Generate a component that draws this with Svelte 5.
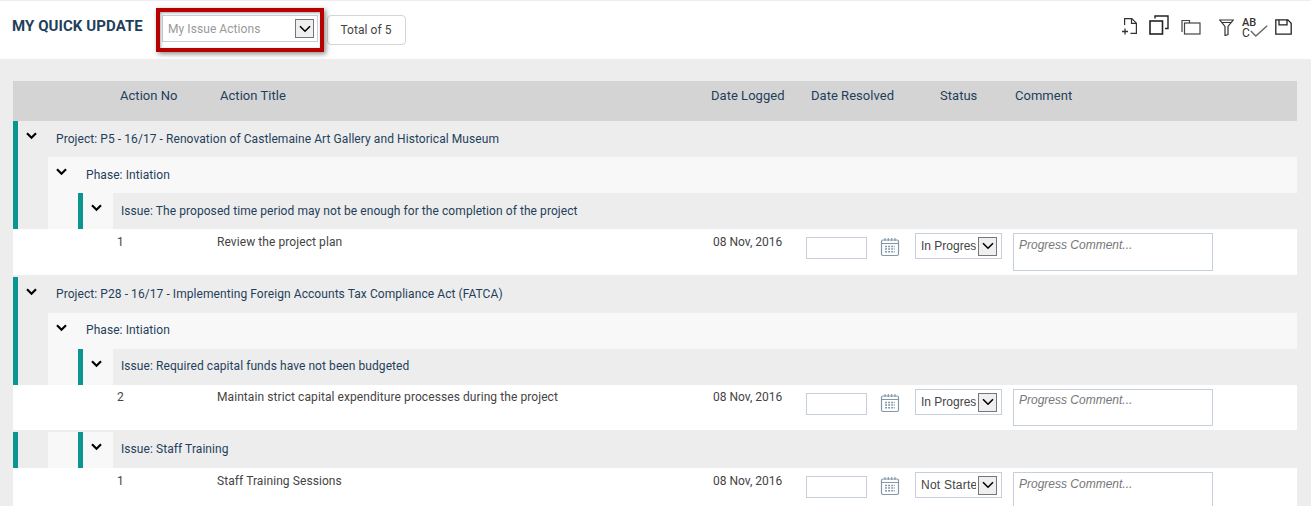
<script>
  const sections = [
    {
      cls: '',
      project: 'Project: P5 - 16/17 - Renovation of Castlemaine Art Gallery and Historical Museum',
      phase: 'Phase: Intiation',
      issue: 'Issue: The proposed time period may not be enough for the completion of the project',
      no: '1', title: 'Review the project plan', date: '08 Nov, 2016', status: 'In Progress', h: 46
    },
    {
      cls: 'spaced tight',
      project: 'Project: P28 - 16/17 - Implementing Foreign Accounts Tax Compliance Act (FATCA)',
      phase: 'Phase: Intiation',
      issue: 'Issue: Required capital funds have not been budgeted',
      no: '2', title: 'Maintain strict capital expenditure processes during the project', date: '08 Nov, 2016', status: 'In Progress', h: 45
    },
    {
      cls: 'spaced',
      issue: 'Issue: Staff Training',
      no: '1', title: 'Staff Training Sessions', date: '08 Nov, 2016', status: 'Not Started', h: 46
    }
  ];
</script>

{#snippet chev()}
  <svg class="chev" width="11" height="8" viewBox="0 0 11 8"><path d="M1 1.2l4.5 4.5L10 1.2" fill="none" stroke="#000" stroke-width="2.2"/></svg>
{/snippet}

{#snippet arrow()}
  <span class="arrow"><svg width="12" height="8" viewBox="0 0 12 8"><path d="M1 1.2l5 5 5-5" fill="none" stroke="#000" stroke-width="1.6"/></svg></span>
{/snippet}

<div class="page">
  <header class="top">
    <h1>MY QUICK UPDATE</h1>
    <div class="picker">
      <div class="sel main"><span>My Issue Actions</span>{@render arrow()}</div>
      <div class="redbox"></div>
    </div>
    <button class="total">Total of 5</button>
    <div class="tools">
      <svg class="t1" width="17" height="18" viewBox="0 0 17 18" fill="none" stroke="#333" stroke-width="1.2">
        <path d="M3.6 8V1.6h7.2l4.6 4.6v10.2H9.5M10.5 1.6v4.8h4.9"/><path d="M1 14.5h6M4 11.5v6" stroke-width="1.3"/>
      </svg>
      <svg class="t2" width="20" height="20" viewBox="0 0 20 20" fill="none" stroke="#222">
        <rect x="1" y="6" width="12.5" height="13" stroke-width="1.6"/><path d="M6 3.5V1h13v12.5h-3" stroke-width="1.4"/>
      </svg>
      <svg class="t3" width="20" height="16" viewBox="0 0 20 16" fill="none" stroke="#444" stroke-width="1.2">
        <rect x="3.5" y="4" width="15.5" height="11"/><path d="M1 13V1.5h7.5V4"/>
      </svg>
      <svg class="t4" width="15" height="17" viewBox="0 0 15 17" fill="none" stroke="#333" stroke-width="1.2">
        <path d="M.8 1h13.4L9 7.5v8l-3 1v-9zM3 3.5h9"/>
      </svg>
      <div class="abc">
        <span class="ab">AB</span><span class="c">C</span>
        <svg width="18" height="12" viewBox="0 0 18 12" fill="none" stroke="#666" stroke-width="1.4"><path d="M.8 6l5 5L17.2 .8"/></svg>
      </div>
      <svg class="t6" width="17" height="16" viewBox="0 0 17 16" fill="none" stroke="#222" stroke-width="1.3">
        <path d="M.8.8h12l3.4 3.4v11H.8zM4 .8v5h8v-5"/>
      </svg>
    </div>
  </header>

  <main class="board">
    <div class="thead">
      <span>Action No</span><span>Action Title</span><span>Date Logged</span><span>Date Resolved</span><span>Status</span><span>Comment</span>
    </div>

    {#each sections as s}
      <section class={s.cls}>
        <div class="heads">
          {#if s.project}
            <div class="line project">{@render chev()}<span>{s.project}</span></div>
          {/if}
          <div class="phase">
            {#if s.phase}
              <div class="line phasehead">{@render chev()}<span>{s.phase}</span></div>
            {/if}
            <div class="issue">
              <div class="caretcell">{@render chev()}</div>
              <div class="line issuehead"><span>{s.issue}</span></div>
            </div>
          </div>
        </div>
        <div class="data" style="height:{s.h}px">
          <span class="no">{s.no}</span>
          <span class="title">{s.title}</span>
          <span class="date">{s.date}</span>
          <div class="resolved">
            <div class="dateinput"></div>
            <svg width="20" height="20" viewBox="0 0 20 20" fill="none" stroke="#8298aa">
              <rect x="1.5" y="3" width="17" height="15.5" rx="1.5" stroke-width="1.2"/>
              <path d="M1.5 6.5h17M5 1v3M8.3 1v3M11.7 1v3M15 1v3" stroke-width="1.1"/>
              <path d="M5 9.5h10M5 12h10M5 14.8h10" stroke-width="1.6" stroke-dasharray="2 1.1"/>
            </svg>
          </div>
          <div class="sel status"><span class="val" class:wide={s.status === 'Not Started'}>{s.status}</span>{@render arrow()}</div>
          <div class="comment">Progress Comment...</div>
        </div>
      </section>
    {/each}
  </main>
</div>

<style>
  :global(body) { margin: 0; background: #ededed; overflow: hidden; }
  .page { height: 506px; overflow: hidden; padding-top: 1px; box-sizing: border-box; font-family: Roboto, "Liberation Sans", sans-serif; color: #1f3f5b; }

  .top { height: 58px; background: #fff; display: flex; align-items: flex-start; position: relative; }
  h1 { margin: 16px 0 0 12px; width: 150px; font-size: 15px; line-height: 18px; font-weight: 700; letter-spacing: .07px; color: #1f3f5b; white-space: nowrap; }
  .picker { position: relative; margin: 14px 0 0 0; }
  .sel { display: flex; align-items: center; box-sizing: border-box; border: 1px solid #c5d0dc; background: #fff; font-family: "Liberation Sans", sans-serif; font-size: 12px; color: #444; overflow: hidden; white-space: nowrap; }
  .sel.main { width: 156px; height: 27px; padding: 0 3px 0 5px; font-family: Roboto, sans-serif; color: #999; letter-spacing: .07px; justify-content: space-between; }
  .arrow { flex: none; box-sizing: border-box; width: 19px; height: 19px; border: 1px solid #767676; background: #efefef; display: flex; align-items: center; justify-content: center; }
  .redbox { position: absolute; left: -6px; top: -7px; width: 168px; height: 44px; box-sizing: border-box; border: 4px solid #b90000; box-shadow: 2px 2px 5px rgba(0,0,0,.45), inset 1px 1px 3px rgba(0,0,0,.35); pointer-events: none; }
  .total { margin: 14px 0 0 9px; width: 79px; height: 30px; box-sizing: border-box; background: #fff; border: 1px solid #d5d5d5; border-radius: 4px; font: 12px Roboto, sans-serif; letter-spacing: .07px; color: #444; padding: 0 1px 0 0; }

  .tools { margin-left: auto; display: flex; align-items: flex-start; margin-right: 19px; }
  .tools svg { display: block; }
  .t1 { margin-top: 16px; }
  .t2 { margin: 14px 0 0 11px; }
  .t3 { margin: 18px 0 0 12px; }
  .t4 { margin: 18px 0 0 18px; }
  .abc { position: relative; width: 26px; height: 20px; margin: 17px 0 0 8px; font: 500 11px/10px Roboto, sans-serif; color: #333; }
  .abc span { display: block; }
  .abc .c { font-size: 12px; font-weight: 400; }
  .abc svg { position: absolute; left: 8px; top: 7px; }
  .t6 { margin: 18px 0 0 7px; }

  .board { margin: 22px 14px 0 13px; }
  .thead { height: 40px; background: #d4d4d4; display: grid; grid-template-columns: 207px 491px 100px 129px 75px 1fr; padding-left: 0; font-size: 13px; line-height: 30px; letter-spacing: .03px; }
  .thead span { white-space: nowrap; }
  .thead span:first-child { margin-left: 107px; width: 0; }

  .spaced { margin-top: 2px; }
  .heads { border-left: 5px solid #0a9690; font-size: 12px; letter-spacing: .07px; }
  .line { height: 36px; box-sizing: border-box; display: flex; align-items: center; position: relative; }
  .spaced .line { padding-bottom: 2px; }
  .line span { white-space: nowrap; }
  .chev { display: block; flex: none; }
  .project { padding-left: 38px; }
  .project .chev { position: absolute; left: 8px; top: 11px; }
  .phase { margin-left: 30px; background: #f8f8f8; }
  .phasehead { padding-left: 38px; }
  .phasehead .chev { position: absolute; left: 8px; top: 11px; }
  .issue { margin-left: 30px; border-left: 5px solid #0a9690; display: flex; }
  .caretcell { width: 30px; flex: none; position: relative; }
  .caretcell .chev { position: absolute; left: 8px; top: 11px; }
  .issuehead { flex: 1; background: #ededed; padding-left: 8px; }

  .data { background: #fff; display: grid; grid-template-columns: 100px 496px 93px 109px 98px 1fr; padding-left: 104px; align-items: start; font-size: 12px; color: #444; box-sizing: border-box; }
  .data > span { margin-top: 6px; line-height: 14px; white-space: nowrap; }
  .data > .title { letter-spacing: .08px; }
  .tight .data > span { margin-top: 5px; }
  .resolved { display: flex; align-items: flex-start; gap: 13px; margin-top: 8px; }
  .dateinput { width: 61px; height: 22px; box-sizing: border-box; border: 1px solid #c5d0dc; }
  .resolved svg { display: block; }
  .status { width: 87px; height: 26px; margin-top: 4px; padding: 0 3px 0 5px; }
  .val { width: 55px; overflow: hidden; flex: none; margin-right: 2px; }
  .val.wide { letter-spacing: .25px; }
  .comment { width: 200px; height: 38px; box-sizing: border-box; margin-top: 4px; border: 1px solid #c5d0dc; padding: 4px 5px; font: italic 12px "Liberation Sans", sans-serif; color: #777; }
  .tight .comment { height: 37px; padding-top: 3px; }
</style>
